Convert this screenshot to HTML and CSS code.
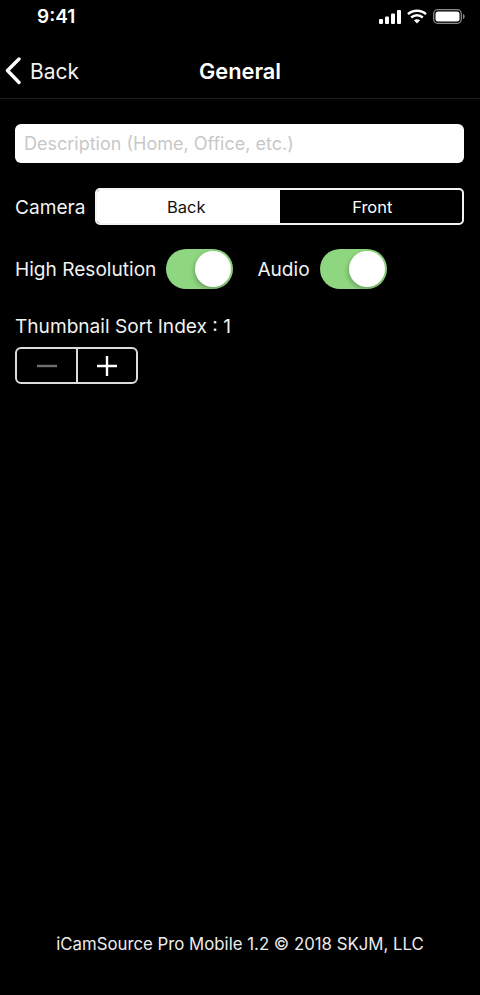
FILE: index.html
```html
<!DOCTYPE html>
<html lang="en">
<head>
    <meta charset="UTF-8">
    <meta name="viewport" content="width=device-width, initial-scale=1.0">
    <title>General</title>
    <link rel="stylesheet" href="styles.css">
</head>
<body>
    <div class="screen">
        <!-- Status bar -->
        <div class="status-bar">
            <span class="time">9:41</span>
            <div class="status-icons">
                <svg width="22" height="14" viewBox="0 0 22 14" fill="#fff"><rect x="0" y="9" width="4" height="5" rx="1"/><rect x="6" y="6.500" width="4" height="7.500" rx="1"/><rect x="12" y="3.500" width="4" height="10.500" rx="1"/><rect x="18" y="0" width="4" height="14" rx="1"/></svg>
                <svg width="20" height="15" viewBox="0 0 20 15" fill="none" stroke="#fff" stroke-width="2.400"><path d="M1 5.200C6 .6 14 .6 19 5.200"/><path d="M4.200 8.500C7.500 5.500 12.500 5.500 15.800 8.500"/><path d="M10 14.500 6.900 11.300C8.700 9.800 11.300 9.800 13.100 11.300Z" fill="#fff" stroke="none"/></svg>
                <svg width="32" height="15" viewBox="0 0 32 15"><rect x="0.700" y="0.700" width="27.600" height="13.600" rx="4" fill="none" stroke="#8a8a8a" stroke-width="1.300"/><rect x="2.500" y="2.500" width="24" height="10" rx="2.500" fill="#fff"/><path d="M30 5v5c1-.3 1.700-1.300 1.700-2.500S31 5.300 30 5z" fill="#8a8a8a"/></svg>
            </div>
        </div>

        <!-- Nav bar -->
        <div class="nav-bar">
            <a class="back-link">
                <svg width="18" height="28" viewBox="0 0 18 28" fill="none" stroke="#fff" stroke-width="3.400" stroke-linecap="round" stroke-linejoin="round"><path d="M15 2 3.500 13.500 15 25.500"/></svg>
                <span>Back</span>
            </a>
            <h1>General</h1>
        </div>

        <!-- Form -->
        <div class="content">
            <div class="text-field">Description (Home, Office, etc.)</div>

            <div class="row camera-row">
                <span class="label">Camera</span>
                <div class="segmented">
                    <div class="segment active">Back</div>
                    <div class="segment">Front</div>
                </div>
            </div>

            <div class="row switch-row">
                <span class="label">High Resolution</span>
                <div class="switch"><div class="knob"></div></div>
                <span class="label audio-label">Audio</span>
                <div class="switch"><div class="knob"></div></div>
            </div>

            <div class="label sort-label">Thumbnail Sort Index : 1</div>
            <div class="stepper">
                <div class="step">
                    <svg width="22" height="22" viewBox="0 0 22 22" stroke="#6f6f6f" stroke-width="2.400"><path d="M1 11h20"/></svg>
                </div>
                <div class="step">
                    <svg width="22" height="22" viewBox="0 0 22 22" stroke="#fff" stroke-width="2.400"><path d="M1 11h20M11 1v20"/></svg>
                </div>
            </div>
        </div>

        <div class="footer">iCamSource Pro Mobile 1.2 © 2018 SKJM, LLC</div>
    </div>
</body>
</html>
```

FILE: styles.css
```css
html, body {
    margin: 0;
    padding: 0;
    background-color: #000;
}
.screen {
    width: 480px;
    height: 995px;
    display: flex;
    flex-direction: column;
    color: #fff;
    font-family: Inter, "Liberation Sans", sans-serif;
    overflow: hidden;
}

/* Status bar */
.status-bar {
    height: 33px;
    display: flex;
    justify-content: space-between;
    align-items: center;
    padding: 0 15px 0 37px;
    box-sizing: border-box;
}
.time {
    font-size: 19px;
    font-weight: 600;
}
.status-icons {
    display: flex;
    align-items: center;
    gap: 6px;
}

/* Nav bar */
.nav-bar {
    height: 66px;
    padding-top: 11px;
    display: flex;
    align-items: center;
    justify-content: center;
    position: relative;
    box-sizing: border-box;
    border-bottom: 1px solid #1c1c1c;
}
.nav-bar h1 {
    margin: 0;
    font-size: 21.800px;
    font-weight: 600;
}
.back-link {
    position: absolute;
    left: 4px;
    top: 11px;
    bottom: 0;
    display: flex;
    align-items: center;
    gap: 8px;
    font-size: 21px;
    color: #f2f2f2;
}

/* Form */
.content {
    flex-grow: 1;
    padding: 25px 16px 0 15px;
}
.text-field {
    height: 39px;
    line-height: 39px;
    background-color: #fff;
    border-radius: 6px;
    padding-left: 9px;
    font-size: 18px;
    color: #c8c8c8;
}
.row {
    display: flex;
    align-items: center;
}
.label {
    font-size: 19.100px;
    color: #f2f2f2;
}
.camera-row {
    margin-top: 25px;
    justify-content: space-between;
}
.segmented {
    width: 369px;
    height: 37px;
    display: flex;
    box-sizing: border-box;
    border: 2px solid #f4f4f4;
    border-radius: 5px;
    overflow: hidden;
}
.segment {
    width: 183px;
    display: flex;
    align-items: center;
    justify-content: center;
    font-size: 16.500px;
    padding-left: 3px;
    box-sizing: border-box;
}
.segment.active {
    padding: 0 4px 0 0;
    background-color: #fff;
    color: #111;
}
.switch-row {
    margin-top: 24px;
}
.switch {
    width: 67px;
    height: 40px;
    margin-left: 10px;
    background-color: #8ed67f;
    border-radius: 20px;
    display: flex;
    justify-content: flex-end;
    align-items: center;
    padding-right: 2px;
    box-sizing: border-box;
}
.knob {
    width: 36px;
    height: 36px;
    border-radius: 50%;
    background-color: #fff;
    box-shadow: -1px 2px 4px rgba(0, 0, 0, 0.25);
}
.audio-label {
    margin-left: 24px;
}
.sort-label {
    margin-top: 25px;
}
.stepper {
    width: 123px;
    height: 37px;
    margin-top: 9px;
    display: flex;
    box-sizing: border-box;
    border: 2px solid #dcdcdc;
    border-radius: 6px;
}
.step {
    width: 59px;
    display: flex;
    align-items: center;
    justify-content: center;
}
.step + .step {
    flex: 1;
    border-left: 2px solid #dcdcdc;
}

.footer {
    height: 61px;
    text-align: center;
    font-size: 16.800px;
    color: #ececec;
}
```
